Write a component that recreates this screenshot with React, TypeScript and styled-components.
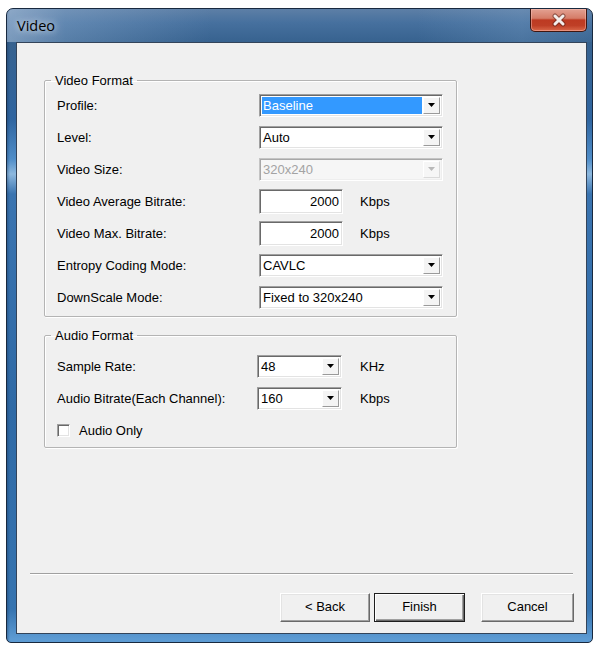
import React from "react";
import styled, { createGlobalStyle, css } from "styled-components";

const GlobalStyle = createGlobalStyle`
  html, body {
    margin: 0;
    padding: 0;
    background: #ffffff;
  }
  body {
    font-family: "Liberation Sans", Arial, sans-serif;
    font-size: 13px;
    color: #000;
  }
`;

const Desktop = styled.div`
  width: 598px;
  height: 648px;
  box-sizing: border-box;
  padding: 8px 5px 5px 6px;
  display: flex;
`;

const Frame = styled.div`
  flex: 1;
  display: flex;
  flex-direction: column;
  border: 1px solid #18293f;
  border-radius: 7px 7px 5px 5px;
  padding: 0 5px 8px 9px;
  background:
    linear-gradient(90deg, rgba(20, 50, 90, 0.35) 0px, rgba(20, 50, 90, 0) 3px),
    linear-gradient(
      180deg,
      #5d7fa6 0px,
      #46709e 14px,
      #37628f 33px,
      #2f65a0 110px,
      #4f8dc8 150px,
      #8db8de 165px,
      #3a74b0 185px,
      #2f6aa6 400px,
      #3674b0 600px,
      #5d9bd3 630px
    );
`;

const TitleBar = styled.div`
  height: 33px;
  display: flex;
  justify-content: space-between;
  align-items: flex-start;
  margin: 0 -5px 0 -9px;
  padding: 0 5px 0 10px;
  background: linear-gradient(
    90deg,
    rgba(190, 210, 232, 0.5) 0%,
    rgba(160, 190, 222, 0.3) 10%,
    rgba(110, 150, 190, 0) 35%,
    rgba(110, 150, 190, 0) 70%,
    rgba(150, 185, 220, 0.2) 88%,
    rgba(150, 185, 220, 0.05) 100%
  );
  border-radius: 6px 6px 0 0;
`;

const TitleText = styled.span`
  margin-top: 7px;
  font-family: "Open Sans", "Noto Sans", sans-serif;
  font-size: 14.5px;
  line-height: 20px;
  color: #000;
  text-shadow: 0 0 6px rgba(255, 255, 255, 0.75), 0 0 12px rgba(230, 240, 250, 0.6);
`;

const CloseButton = styled.div`
  width: 57px;
  height: 23px;
  box-sizing: border-box;
  border: 1px solid #3f1610;
  border-top: none;
  border-radius: 0 0 5px 5px;
  display: flex;
  align-items: center;
  justify-content: center;
  background: linear-gradient(
    180deg,
    #e3a192 0%,
    #d57c68 42%,
    #bd3a22 50%,
    #bf3f26 75%,
    #d9684a 100%
  );
  box-shadow: inset 0 0 0 1px rgba(255, 200, 190, 0.45);
`;

const Client = styled.div`
  flex: 1;
  display: flex;
  flex-direction: column;
  background: #f0f0f0;
  border: 1px solid #33445a;
`;

const Group = styled.fieldset<{ $top: number; $padTop: number; $padBottom: number }>`
  margin: ${(p) => p.$top}px 0 0 27px;
  width: 413px;
  box-sizing: border-box;
  min-width: 0;
  padding: ${(p) => p.$padTop}px 0 ${(p) => p.$padBottom}px 12px;
  border: 1px solid #b4b4b4;
  border-radius: 2px;
  box-shadow: inset 1px 1px 0 #ffffff, 1px 1px 0 #ffffff;
`;

const GroupTitle = styled.legend`
  margin-left: -6px;
  padding: 0 4px;
  line-height: 15px;
  font-size: 13px;
`;

const Row = styled.div`
  height: 32px;
  display: flex;
  align-items: center;
`;

const FieldLabel = styled.span<{ $w: number }>`
  width: ${(p) => p.$w}px;
  flex: none;
`;

const sunken = css`
  border: 1px solid;
  border-color: #a0a0a0 #ffffff #ffffff #a0a0a0;
  box-shadow: inset 1px 1px 0 #696969, inset -1px -1px 0 #e3e3e3;
`;

const ComboBox = styled.div<{ $w: number; $disabled?: boolean }>`
  width: ${(p) => p.$w}px;
  height: 23px;
  box-sizing: border-box;
  display: flex;
  padding: 2px;
  background: ${(p) => (p.$disabled ? "#f6f6f6" : "#ffffff")};
  ${sunken};
  ${(p) =>
    p.$disabled &&
    css`
      border-color: #c4c4c4 #ffffff #ffffff #c4c4c4;
      box-shadow: inset 1px 1px 0 #a8a8a8, inset -1px -1px 0 #eeeeee;
    `}
`;

const ComboValue = styled.span<{ $selected?: boolean; $disabled?: boolean }>`
  flex: 1;
  padding-left: 1px;
  line-height: 17px;
  white-space: nowrap;
  color: ${(p) => (p.$disabled ? "#a3a3a3" : p.$selected ? "#ffffff" : "#000")};
  background: ${(p) => (p.$selected ? "#3399ff" : "transparent")};
  margin-right: 1px;
`;

const ComboArrow = styled.span<{ $disabled?: boolean }>`
  width: 17px;
  flex: none;
  box-sizing: border-box;
  display: flex;
  align-items: center;
  justify-content: center;
  background: ${(p) => (p.$disabled ? "#f6f6f6" : "#f4f4f4")};
  border: 1px solid;
  border-color: #ffffff #9a9a9a #9a9a9a #ffffff;
  ${(p) =>
    p.$disabled &&
    css`
      border-color: #ffffff #dadada #dadada #ffffff;
    `}
`;

const TextField = styled.div`
  width: 84px;
  height: 25px;
  box-sizing: border-box;
  padding: 0 3px;
  background: #ffffff;
  text-align: right;
  line-height: 23px;
  ${sunken};
`;

const Unit = styled.span<{ $gap: number }>`
  margin-left: ${(p) => p.$gap}px;
`;

const CheckBox = styled.span`
  width: 13px;
  height: 13px;
  box-sizing: border-box;
  background: #ffffff;
  margin-right: 9px;
  ${sunken};
`;

const Spacer = styled.div`
  flex: 1;
`;

const Separator = styled.div`
  margin: 0 13px;
  border-top: 1px solid #a0a0a0;
  border-bottom: 1px solid #ffffff;
`;

const ButtonBar = styled.div`
  margin-top: 18px;
  padding: 0 12px 11px 0;
  display: flex;
  justify-content: flex-end;
`;

const PushButton = styled.button<{ $w: number; $gap: number; $default?: boolean }>`
  width: ${(p) => p.$w}px;
  height: 29px;
  margin-left: ${(p) => p.$gap}px;
  box-sizing: border-box;
  padding: 0 0 3px;
  font-family: "Liberation Sans", Arial, sans-serif;
  font-size: 13px;
  color: #000;
  background: #f0f0f0;
  border: 1px solid;
  border-color: #ffffff #696969 #696969 #ffffff;
  box-shadow: inset -1px -1px 0 #a0a0a0, inset 1px 1px 0 #e3e3e3;
  ${(p) =>
    p.$default &&
    css`
      border-color: #1e1e1e;
      box-shadow: inset 1px 1px 0 #ffffff, inset -1px -1px 0 #696969, inset -2px -2px 0 #a0a0a0;
    `}
`;

const Arrow = ({ disabled }: { disabled?: boolean }) => (
  <svg width="7" height="4" viewBox="0 0 7 4">
    <polygon points="0,0 7,0 3.5,4" fill={disabled ? "#b8b8b8" : "#000"} />
  </svg>
);

const CloseGlyph = () => (
  <svg width="16" height="14" viewBox="0 0 16 14">
    <path
      d="M4 3 L12 11 M12 3 L4 11"
      stroke="#4a1e18"
      strokeWidth="5"
      strokeLinecap="round"
      fill="none"
      opacity="0.5"
    />
    <path
      d="M4 3 L12 11 M12 3 L4 11"
      stroke="#f3eeec"
      strokeWidth="3"
      strokeLinecap="round"
      fill="none"
    />
  </svg>
);

type ComboProps = { value: string; width: number; selected?: boolean; disabled?: boolean };

const Combo = ({ value, width, selected, disabled }: ComboProps) => (
  <ComboBox $w={width} $disabled={disabled}>
    <ComboValue $selected={selected} $disabled={disabled}>
      {value}
    </ComboValue>
    <ComboArrow $disabled={disabled}>
      <Arrow disabled={disabled} />
    </ComboArrow>
  </ComboBox>
);

const VIDEO_LABEL_W = 202;
const AUDIO_LABEL_W = 200;

export default function App() {
  return (
    <>
      <GlobalStyle />
      <Desktop>
        <Frame>
          <TitleBar>
            <TitleText>Video</TitleText>
            <CloseButton>
              <CloseGlyph />
            </CloseButton>
          </TitleBar>
          <Client>
            <Group $top={30} $padTop={1} $padBottom={3}>
              <GroupTitle>Video Format</GroupTitle>
              <Row>
                <FieldLabel $w={VIDEO_LABEL_W}>Profile:</FieldLabel>
                <Combo value="Baseline" width={184} selected />
              </Row>
              <Row>
                <FieldLabel $w={VIDEO_LABEL_W}>Level:</FieldLabel>
                <Combo value="Auto" width={184} />
              </Row>
              <Row>
                <FieldLabel $w={VIDEO_LABEL_W}>Video Size:</FieldLabel>
                <Combo value="320x240" width={184} disabled />
              </Row>
              <Row>
                <FieldLabel $w={VIDEO_LABEL_W}>Video Average Bitrate:</FieldLabel>
                <TextField>2000</TextField>
                <Unit $gap={17}>Kbps</Unit>
              </Row>
              <Row>
                <FieldLabel $w={VIDEO_LABEL_W}>Video Max. Bitrate:</FieldLabel>
                <TextField>2000</TextField>
                <Unit $gap={17}>Kbps</Unit>
              </Row>
              <Row>
                <FieldLabel $w={VIDEO_LABEL_W}>Entropy Coding Mode:</FieldLabel>
                <Combo value="CAVLC" width={184} />
              </Row>
              <Row>
                <FieldLabel $w={VIDEO_LABEL_W}>DownScale Mode:</FieldLabel>
                <Combo value="Fixed to 320x240" width={184} />
              </Row>
            </Group>
            <Group $top={11} $padTop={7} $padBottom={1}>
              <GroupTitle>Audio Format</GroupTitle>
              <Row>
                <FieldLabel $w={AUDIO_LABEL_W}>Sample Rate:</FieldLabel>
                <Combo value="48" width={85} />
                <Unit $gap={18}>KHz</Unit>
              </Row>
              <Row>
                <FieldLabel $w={AUDIO_LABEL_W}>Audio Bitrate(Each Channel):</FieldLabel>
                <Combo value="160" width={85} />
                <Unit $gap={18}>Kbps</Unit>
              </Row>
              <Row>
                <CheckBox />
                <span>Audio Only</span>
              </Row>
            </Group>
            <Spacer />
            <Separator />
            <ButtonBar>
              <PushButton $w={90} $gap={0}>
                &lt; Back
              </PushButton>
              <PushButton $w={91} $gap={4} $default>
                Finish
              </PushButton>
              <PushButton $w={93} $gap={16}>
                Cancel
              </PushButton>
            </ButtonBar>
          </Client>
        </Frame>
      </Desktop>
    </>
  );
}
